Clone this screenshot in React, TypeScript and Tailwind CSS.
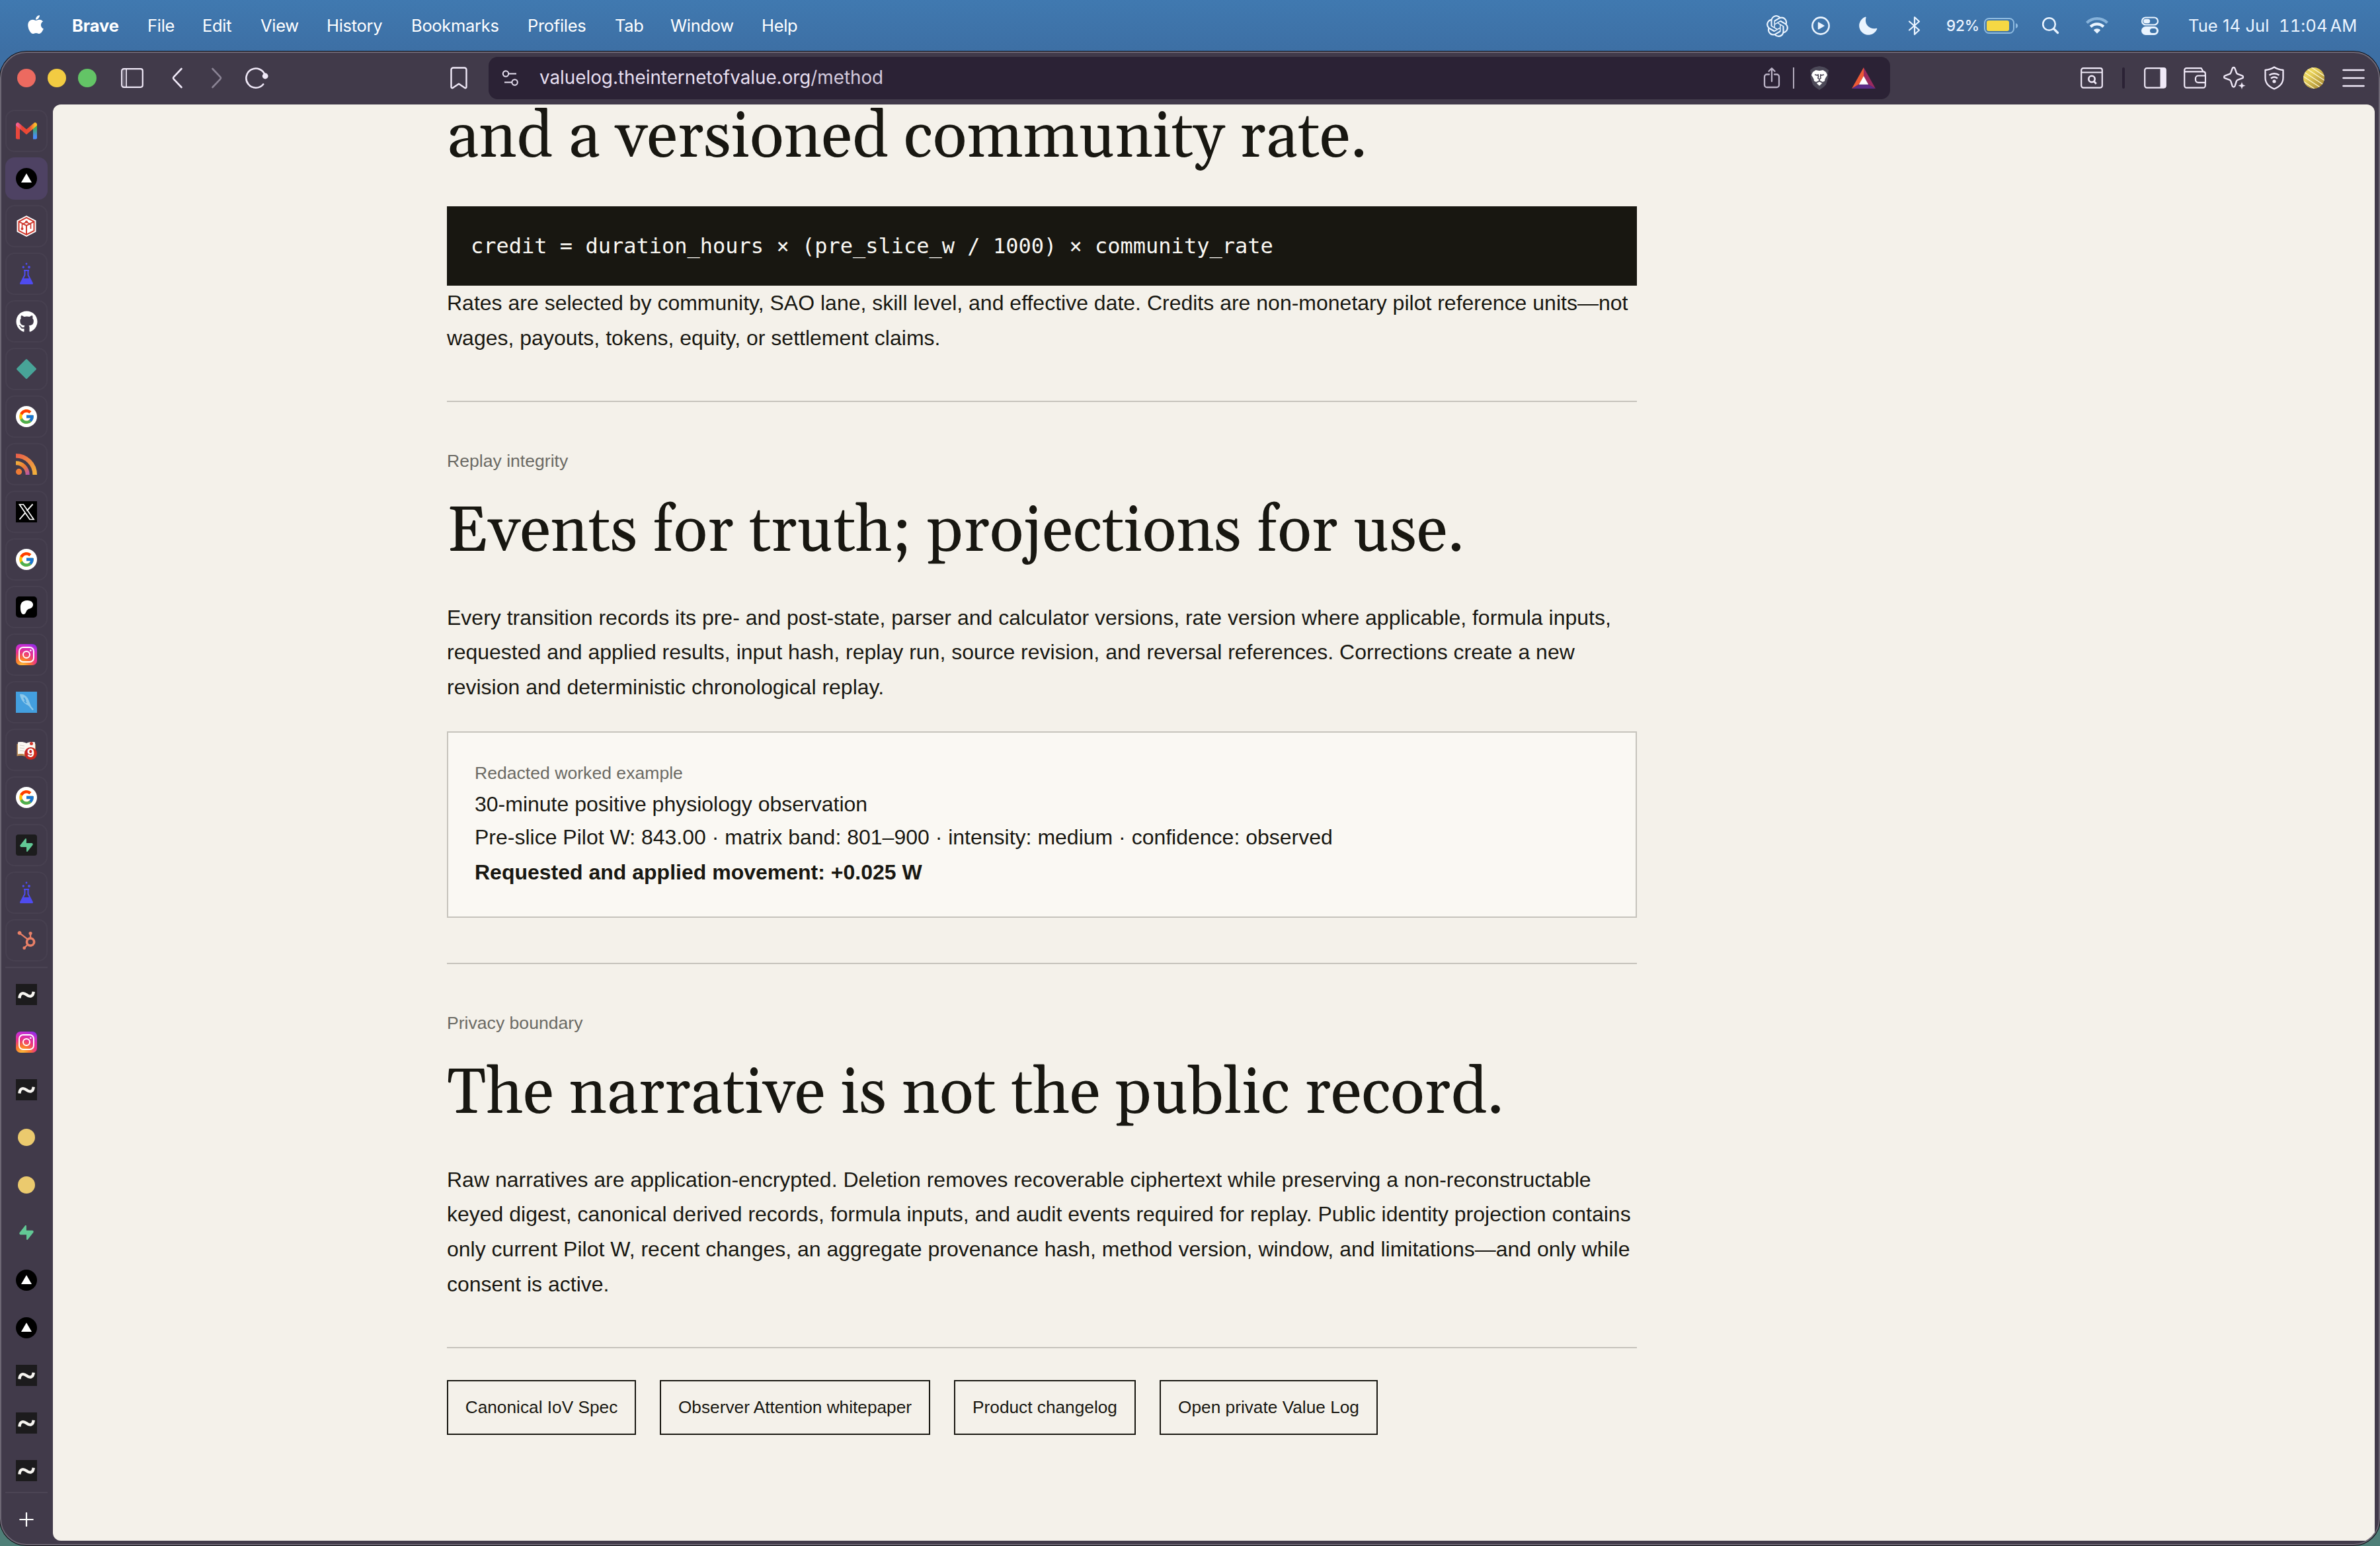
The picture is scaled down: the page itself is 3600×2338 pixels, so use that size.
import React from "react";
import { FaApple, FaGithub } from "react-icons/fa";
import { FcGoogle } from "react-icons/fc";
import { SiHubspot, SiOpenai, SiPatreon, SiSupabase } from "react-icons/si";

/* ---------- menu bar ---------- */

const menuItems = [
  { label: "File", width: "w-[83px]" },
  { label: "Edit", width: "w-[88px]" },
  { label: "View", width: "w-[100px]" },
  { label: "History", width: "w-[128px]" },
  { label: "Bookmarks", width: "w-[176px]" },
  { label: "Profiles", width: "w-[132px]" },
  { label: "Tab", width: "w-[84px]" },
  { label: "Window", width: "w-[138px]" },
  { label: "Help", width: "w-[80px]" },
];

function MenuBar() {
  return (
    <header className="flex h-[78px] w-full items-center font-['Inter',sans-serif] text-[25.5px] tracking-[-0.3px] text-white">
      <FaApple className="ml-[39px] mb-[4px] h-[32px] w-[30px] shrink-0" />
      <span className="ml-[40px] w-[114px] font-bold tracking-[-0.1px]">
        Brave
      </span>
      {menuItems.map((item) => (
        <span key={item.label} className={item.width}>
          {item.label}
        </span>
      ))}

      <div className="ml-auto flex items-center text-[#eaf4ff]">
        <div className="flex w-[66px] justify-center">
          <SiOpenai className="h-[33px] w-[33px]" />
        </div>
        <div className="flex w-[66px] justify-center">
          <svg width="30" height="30" viewBox="0 0 30 30" fill="none">
            <circle cx="15" cy="15" r="12.6" stroke="currentColor" strokeWidth="2.6" />
            <path d="M11.5 10.2v9.6l8.6-4.8z" fill="currentColor" stroke="currentColor" strokeWidth="1.4" strokeLinejoin="round" />
          </svg>
        </div>
        <div className="flex w-[78px] justify-center">
          <svg width="28" height="28" viewBox="0 0 28 28" fill="currentColor">
            <path d="M9.5.6c.7-.3 1.4.3 1.1 1C9.2 6.2 10 11 13.5 14.6c3.4 3.3 8.2 4.4 12.6 3.1.8-.2 1.4.5 1.1 1.2A14 14 0 1 1 9.5.6z" />
          </svg>
        </div>
        <div className="flex w-[62px] justify-center">
          <svg width="20" height="30" viewBox="0 0 20 30" fill="none" stroke="currentColor" strokeWidth="2.2" strokeLinejoin="round" strokeLinecap="round">
            <path d="M2 8.5l15 13L10 28V2l7 6.5-15 13" />
          </svg>
        </div>
        <div className="flex w-[142px] items-center pl-[17px]">
          <span className="w-[57px] text-[22.5px] font-medium tracking-[-0.2px]">92%</span>
          <svg width="52" height="26" viewBox="0 0 52 26" fill="none">
            <rect x="1" y="2" width="44" height="22" rx="6.5" stroke="#8fbbe0" strokeWidth="2" />
            <rect x="4" y="5" width="34" height="16" rx="3" fill="#f6d844" />
            <path d="M48 9c2 .8 3.2 2.2 3.2 4s-1.2 3.2-3.2 4z" fill="#8fbbe0" />
          </svg>
        </div>
        <div className="flex w-[64px] justify-center">
          <svg width="28" height="28" viewBox="0 0 28 28" fill="none" stroke="currentColor" strokeLinecap="round">
            <circle cx="12.5" cy="11.5" r="9.3" strokeWidth="2.6" />
            <path d="M19.5 18.5l6 6" strokeWidth="3.4" />
          </svg>
        </div>
        <div className="flex w-[78px] justify-center">
          <svg width="36" height="28" viewBox="0 0 36 28" fill="none" stroke="currentColor">
            <path d="M2.5 9.5C11 1 25 1 33.5 9.5" stroke="#86b2da" strokeWidth="4.2" />
            <path d="M8.2 15.4c5.5-5.4 14.1-5.4 19.6 0" strokeWidth="4.4" />
            <path d="M12.8 20.4c3-2.8 7.4-2.8 10.4 0L18 25.8z" fill="currentColor" stroke="none" />
          </svg>
        </div>
        <div className="flex w-[81px] justify-center">
          <svg width="28" height="28" viewBox="0 0 28 28" fill="none">
            <rect x="2" y="1.5" width="24" height="11" rx="5.5" stroke="currentColor" strokeWidth="2.2" />
            <rect x="4.2" y="3.8" width="10" height="6.4" rx="3.2" fill="currentColor" />
            <rect x="1" y="15" width="26" height="13" rx="6.5" fill="currentColor" />
            <rect x="14" y="18" width="10" height="7" rx="3.5" fill="#3e73a8" />
          </svg>
        </div>
        <div className="w-[308px] whitespace-pre pl-[18px] tracking-[0.1px]">
          Tue 14 Jul{"  "}<span className="tabular-nums">11:04</span>
          <span className="ml-[4px]">AM</span>
        </div>
      </div>
    </header>
  );
}

/* ---------- toolbar ---------- */

function BraveLion() {
  return (
    <svg width="32" height="36" viewBox="0 0 32 36">
      <path d="M9 1.5 16 0l7 1.5 3 1.5 4 3-1 6 .5 5-3.5 11-4 4-6 4-6-4-4-4L2.5 17 3 12 2 6l4-3z" fill="#4c4958" />
      <path d="M10.5 6 16 7l5.5-1 4.5 3L28 13.500l-3.500 6-.5 3-3 1.500-5-2.500-5 2.500-3-1.500-.5-3-3.500-6L6 9z" fill="#fff" />
      <path d="M16 23.500l4.300 2.200-4.300 4-4.300-4z" fill="#fff" />
      <path d="M9 12.800l4.500 1.200M23 12.800l-4.500 1.200M14 12l.5 4-.7 2.200 2.200 1.500 2.200-1.500-.7-2.200.5-4M16 20v3" fill="none" stroke="#2f2a3b" strokeWidth="1.3" />
    </svg>
  );
}

function ToolbarButton({ children }: { children: React.ReactNode }) {
  return (
    <div className="flex h-[60px] w-[60px] items-center justify-center">
      {children}
    </div>
  );
}

function Toolbar() {
  return (
    <div className="flex h-[78px] items-center pb-[2px] text-[#f0e9f8]">
      <div className="ml-[24px] flex gap-[18px]">
        <i className="h-[28px] w-[28px] rounded-full bg-[#ec6a60]" />
        <i className="h-[28px] w-[28px] rounded-full bg-[#f2cb42]" />
        <i className="h-[28px] w-[28px] rounded-full bg-[#63c466]" />
      </div>
      <svg className="ml-[37px]" width="34" height="30" viewBox="0 0 34 30" fill="none" stroke="currentColor" strokeWidth="2.2">
        <rect x="1.2" y="1.2" width="31.6" height="27.6" rx="3" />
        <path d="M8 1v28" strokeWidth="1.8" />
        <path d="M4.5 1v28" strokeWidth="0.5" />
      </svg>
      <svg className="ml-[43px]" width="16" height="32" viewBox="0 0 16 32" fill="none" stroke="currentColor" strokeWidth="2.6" strokeLinecap="round" strokeLinejoin="round">
        <path d="M14.5 2 3 14.2c-1.2 1.2-1.2 2.4 0 3.6L14.5 30" />
      </svg>
      <svg className="ml-[44px] text-[#8a8394]" width="16" height="32" viewBox="0 0 16 32" fill="none" stroke="currentColor" strokeWidth="2.6" strokeLinecap="round" strokeLinejoin="round">
        <path d="M1.5 2 13 14.2c1.2 1.2 1.2 2.4 0 3.6L1.5 30" />
      </svg>
      <svg className="ml-[35px]" width="36" height="34" viewBox="0 0 36 34" fill="none" stroke="currentColor" strokeWidth="2.6" strokeLinecap="round">
        <path d="M27.2 26.5A14.6 14.6 0 1 1 30 13" />
        <circle cx="30.2" cy="14" r="4.4" fill="currentColor" stroke="none" />
      </svg>
      <svg className="ml-[273px]" width="28" height="34" viewBox="0 0 28 34" fill="none" stroke="currentColor" strokeWidth="2.4" strokeLinejoin="round">
        <path d="M5.5 1.5h17a3 3 0 0 1 3 3v26c0 1.5-1.4 2.2-2.6 1.3L14 25.7l-8.9 6.1c-1.2.9-2.6.2-2.6-1.3v-26a3 3 0 0 1 3-3z" />
      </svg>

      <div className="ml-[31px] flex h-[64px] w-[2120px] items-center rounded-[14px] bg-[#2b2235] pl-[20px] text-[#e6dff0]">
        <svg width="26" height="26" viewBox="0 0 26 26" fill="none" stroke="currentColor" strokeWidth="2">
          <circle cx="6" cy="6.5" r="4.2" />
          <path d="M10.5 6.5H22M4 19.5h11" />
          <circle cx="19.6" cy="19.5" r="4.2" />
        </svg>
        <span className="ml-[31px] font-['Inter',sans-serif] text-[27.8px]">
          valuelog.theinternetofvalue.org<span className="text-[#d3cadd]">/method</span>
        </span>
        <svg className="ml-auto text-[#bbb3c6]" width="26" height="34" viewBox="0 0 26 34" fill="none" stroke="currentColor" strokeWidth="2.3" strokeLinecap="round" strokeLinejoin="round">
          <path d="M9 11.5H5.5A3.5 3.5 0 0 0 2 15v12.5A3.5 3.5 0 0 0 5.5 31h15a3.5 3.5 0 0 0 3.5-3.5V15a3.5 3.5 0 0 0-3.5-3.5H17M13 22V2.5M8.500 6.700 13 2.200l4.500 4.500" />
        </svg>
        <span className="ml-[19px] h-[32px] w-[2px] bg-[#b3abbd]" />
        <span className="ml-[22px]"><BraveLion /></span>
        <svg className="ml-[33px] mr-[22px]" width="36" height="32" viewBox="0 0 36 32">
          <path d="M18 0 0 32l11-6.5 7-12z" fill="#ee5a36" />
          <path d="M18 0l18 32-11-6.5-7-12z" fill="#9b2a5f" />
          <path d="M0 32h36l-11-6.5H11z" fill="#5c2d87" />
          <path d="M18 13l7.2 12.7H10.8z" fill="#fff" />
        </svg>
      </div>

      <div className="ml-auto mr-[8px] flex items-center">
        <ToolbarButton>
          <svg width="34" height="32" viewBox="0 0 34 32" fill="none" stroke="currentColor" strokeWidth="2.2">
            <rect x="1.2" y="1.2" width="31.6" height="29.4" rx="3" />
            <path d="M1 7.5h32" />
            <circle cx="17" cy="17.5" r="4.7" strokeWidth="2.6" />
            <path d="M20.2 21l3.6 3.8" strokeWidth="2.8" />
          </svg>
        </ToolbarButton>
        <span className="mx-[16px] h-[32px] w-[4px] rounded-full bg-[#2b2235]" />
        <ToolbarButton>
          <svg width="34" height="32" viewBox="0 0 34 32" fill="none" stroke="currentColor" strokeWidth="2.2">
            <rect x="1.2" y="1.2" width="31.6" height="29.4" rx="3" />
            <path d="M24.5 1H31a2 2 0 0 1 2 2v26a2 2 0 0 1-2 2h-6.5z" fill="currentColor" stroke="none" />
          </svg>
        </ToolbarButton>
        <ToolbarButton>
          <svg width="34" height="32" viewBox="0 0 34 32" fill="none" stroke="currentColor" strokeWidth="2.2" strokeLinejoin="round">
            <path d="M32.8 12.5V9.3a3 3 0 0 0-3-3H1.2M1.2 6v21.6a3 3 0 0 0 3 3h25.6a3 3 0 0 0 3-3v-4.8M1.2 6V4.2a3 3 0 0 1 3-3h22.5L29.500 6" />
            <path d="M33 12.5H22a4 4 0 0 0-4 4v2.300a4 4 0 0 0 4 4h11z" />
          </svg>
        </ToolbarButton>
        <ToolbarButton>
          <svg width="36" height="36" viewBox="0 0 36 36" fill="none" stroke="currentColor" strokeWidth="2.4" strokeLinejoin="round">
            <path d="M14.6 3.6c.8-2.2 3.2-2.2 4 0l2.2 6.2c.4 1.2 1.2 2 2.4 2.4l6.2 2.2c2.2.8 2.2 3.2 0 4l-6.2 2.2c-1.2.4-2 1.2-2.4 2.4l-2.2 6.8c-.8 2.2-3.2 2.2-4 0l-2.2-6.8c-.4-1.2-1.2-2-2.4-2.4l-6.2-2.2c-2.2-.8-2.2-3.2 0-4l6.2-2.2c1.2-.4 2-1.2 2.4-2.4z" />
            <path d="M29 23.5l1.7 4.3 4.3 1.7-4.3 1.7-1.7 4.3-1.7-4.3-4.3-1.7 4.3-1.7z" fill="currentColor" stroke="#413a4a" strokeWidth="0.6" />
          </svg>
        </ToolbarButton>
        <ToolbarButton>
          <svg width="32" height="36" viewBox="0 0 32 36" fill="none" stroke="currentColor" strokeWidth="2.3" strokeLinejoin="round">
            <path d="M16 1.5c3.5 2.4 7.5 3.8 13.5 4.5v11.5C29.5 26 25 31 16 34.5 7 31 2.5 26 2.5 17.5V6C8.5 5.3 12.5 3.9 16 1.5z" />
            <path d="M8.5 13.8c4.5-3.4 10.5-3.4 15 0M11 18.5c3-2.3 7-2.3 10 0" strokeWidth="2.4" />
            <circle cx="16" cy="23" r="2.6" fill="currentColor" stroke="none" />
          </svg>
        </ToolbarButton>
        <ToolbarButton>
          <svg width="32" height="32" viewBox="0 0 32 32">
            <defs>
              <clipPath id="avatar-clip"><circle cx="16" cy="16" r="16" /></clipPath>
              <linearGradient id="avatar-fill" x1="0" y1="0" x2="1" y2="1">
                <stop offset="0.3" stopColor="#ead45c" />
                <stop offset="1" stopColor="#9c7c2c" />
              </linearGradient>
            </defs>
            <g clipPath="url(#avatar-clip)">
              <rect width="32" height="32" fill="url(#avatar-fill)" />
              <path d="M8-3l30 20M2 0l34 22M-2 5l34 22M-4 11l34 22M-6 17l30 20" stroke="#fff8d2" strokeWidth="1.3" />
            </g>
          </svg>
        </ToolbarButton>
        <ToolbarButton>
          <svg width="34" height="30" viewBox="0 0 34 30" stroke="currentColor" strokeWidth="2.6" strokeLinecap="round">
            <path d="M1.5 3h31M1.5 15h31M1.5 27h31" />
          </svg>
        </ToolbarButton>
      </div>
    </div>
  );
}

/* ---------- sidebar tabs ---------- */

function Gmail() {
  return (
    <svg width="32" height="32" viewBox="0 0 32 32" fill="none">
      <defs>
        <linearGradient id="gm-r" x1="0" y1="0" x2="0" y2="1">
          <stop offset="0.2" stopColor="#3fae5a" />
          <stop offset="0.8" stopColor="#4a8df6" />
        </linearGradient>
        <linearGradient id="gm-m" x1="0" y1="0" x2="1" y2="0">
          <stop offset="0" stopColor="#f45f8e" />
          <stop offset="0.25" stopColor="#e94335" />
          <stop offset="0.7" stopColor="#ee4e35" />
          <stop offset="1" stopColor="#fbbc2c" />
        </linearGradient>
      </defs>
      <path d="M0 7h6v21.5H2a2 2 0 0 1-2-2z" fill="#e8473c" />
      <path d="M26 7h6v19.5a2 2 0 0 1-2 2h-4z" fill="url(#gm-r)" />
      <path d="M3 6.5l13 11 13-11" stroke="url(#gm-m)" strokeWidth="6" strokeLinecap="round" />
    </svg>
  );
}

function Triangle() {
  return (
    <svg width="32" height="32" viewBox="0 0 32 32">
      <circle cx="16" cy="16" r="16" fill="#000" />
      <path d="M16 8.3L24 22H8z" fill="#fff" />
    </svg>
  );
}

function Cube() {
  return (
    <svg width="32" height="32" viewBox="0 0 32 32" fill="none">
      <path d="M16 0l14.5 7.5v17L16 32 1.5 24.5v-17z" fill="#fff" />
      <path d="M16 3.2l11.5 6v13.600L16 28.8 4.5 22.8V9.2zM4.5 9.2l11.5 6 11.5-6M16 15.2v13.600" stroke="#cf3a30" strokeWidth="2" />
      <path d="M9.5 20v-6.5L16 9.700l6.500 3.800V20" stroke="#cf3a30" strokeWidth="1.7" />
      <circle cx="16" cy="9.5" r="2" fill="#cf3a30" />
      <circle cx="9.5" cy="20" r="2" fill="#cf3a30" />
    </svg>
  );
}

function Flask() {
  return (
    <svg width="32" height="34" viewBox="0 0 32 34" fill="#4f4bef">
      <path d="M12 12h8M13.5 12v7L7 31.5h18L18.5 19v-7" fill="none" stroke="#4f4bef" strokeWidth="2" strokeLinejoin="round" />
      <path d="M11 24h10l4.8 9H6.200z" />
      <circle cx="16" cy="2" r="1.4" />
      <circle cx="11.3" cy="7" r="1.7" />
      <circle cx="20" cy="7" r="1.9" />
    </svg>
  );
}

function Diamond() {
  return (
    <svg width="32" height="32" viewBox="0 0 32 32">
      <path d="M16 2.5L29.5 16 16 29.5 2.500 16z" fill="#48a498" stroke="#48a498" strokeWidth="3" strokeLinejoin="round" />
    </svg>
  );
}

function Google() {
  return (
    <span className="flex h-[32px] w-[32px] items-center justify-center rounded-full bg-white">
      <FcGoogle className="h-[26px] w-[26px]" />
    </span>
  );
}

function Feed() {
  return (
    <svg width="32" height="32" viewBox="0 0 32 32" fill="none">
      <defs>
        <linearGradient id="feed-a" x1="0" y1="0" x2="1" y2="1">
          <stop offset="0" stopColor="#e9604a" />
          <stop offset="1" stopColor="#f2b23b" />
        </linearGradient>
        <linearGradient id="feed-b" x1="0" y1="0" x2="1" y2="1">
          <stop offset="0" stopColor="#f0ae3c" />
          <stop offset="0.5" stopColor="#ec7a34" />
          <stop offset="1" stopColor="#b957a8" />
        </linearGradient>
      </defs>
      <path d="M0 3.3c16 0 28.7 12.7 28.7 28.7" stroke="url(#feed-a)" strokeWidth="6.6" />
      <path d="M0 14.3c10 0 17.7 7.7 17.7 17.7" stroke="url(#feed-b)" strokeWidth="6" />
      <circle cx="4.6" cy="27.4" r="4.6" fill="#ee7b35" />
    </svg>
  );
}

function XLogo() {
  return (
    <svg width="32" height="32" viewBox="0 0 32 32" fill="none">
      <rect width="32" height="32" fill="#000" />
      <path d="M5.5 5h6L27 27.5h-6z" stroke="#fff" strokeWidth="1.7" />
      <path d="M25.5 4.5l-9 10.2M14.3 17.3L5.500 27.5" stroke="#fff" strokeWidth="1.9" />
    </svg>
  );
}

function Patreon() {
  return (
    <span className="flex h-[32px] w-[32px] items-center justify-center rounded-[5px] bg-black text-white">
      <SiPatreon className="h-[21px] w-[21px]" />
    </span>
  );
}

function Instagram() {
  return (
    <span className="flex h-[32px] w-[32px] items-center justify-center rounded-[7px] bg-[radial-gradient(circle_at_30%_105%,#fdc73e_0%,#fb7a2c_28%,#e8308c_55%,#c92fd0_78%,#6a2cf0_100%)]">
      <svg width="24" height="24" viewBox="0 0 24 24" fill="none" stroke="#fff" strokeWidth="2">
        <rect x="1" y="1" width="22" height="22" rx="6" />
        <circle cx="12" cy="12" r="5" />
        <circle cx="18.3" cy="5.7" r="1.3" fill="#fff" stroke="none" />
      </svg>
    </span>
  );
}

function Feather() {
  return (
    <svg width="32" height="32" viewBox="0 0 32 32" fill="none">
      <rect width="32" height="32" fill="#439fdf" />
      <path d="M6 4c5-1 10 2 13 8l4 10-4-1C12 18 7 12 6 4z" fill="#8dc8ea" />
      <path d="M12 9l3 5M13 14l3 3" stroke="#439fdf" strokeWidth="2" />
      <path d="M18 18l8 9.5" stroke="#8dc8ea" strokeWidth="2.4" />
    </svg>
  );
}

function Reader() {
  return (
    <div className="relative h-[32px] w-[32px]">
      <svg width="32" height="32" viewBox="0 0 32 32" fill="none">
        <path d="M1.5 7v18.5c5-1 9-1 14 1V8zM30 7v18.5c-5-1-9-1-14 1V8z" fill="#b98a55" />
        <path d="M3 4.5c5-1 9-.5 13 1.5v18c-4-2-8-2.5-13-1.5zM29 4.5c-5-1-9-.5-13 1.5v18c4-2 8-2.5 13-1.5z" fill="#fbf8f2" />
        <path d="M6 9l7 1M6 13l7 1M6 17l7 1" stroke="#d5d1ca" />
        <circle cx="23.5" cy="6.5" r="2.5" fill="#d4382c" />
      </svg>
      <span className="absolute bottom-[1px] right-0 flex h-[19px] w-[19px] items-center justify-center rounded-full bg-[#c9281f] font-['Inter',sans-serif] text-[17px] font-bold leading-none text-white">
        9
      </span>
    </div>
  );
}

function SupabaseDark() {
  return (
    <span className="flex h-[32px] w-[32px] items-center justify-center rounded-[4px] bg-[#1c1c1d] text-[#62c895]">
      <SiSupabase className="h-[20px] w-[20px]" />
    </span>
  );
}

function Supabase() {
  return <SiSupabase className="h-[22px] w-[22px] text-[#62c895]" />;
}

function Hubspot() {
  return <SiHubspot className="h-[28px] w-[28px] text-[#ea8067]" />;
}

function Wave() {
  return (
    <svg width="32" height="32" viewBox="0 0 32 32" fill="none">
      <rect width="32" height="32" fill="#1c1b1d" />
      <path d="M5.4 21.5C6 13.5 11 12.5 16 16.3s10 3.2 10.7-4.5" stroke="#f6f4f0" strokeWidth="4.4" />
    </svg>
  );
}

function Dot() {
  return <span className="h-[26px] w-[26px] rounded-full bg-[#ebca6e]" />;
}

function Github() {
  return <FaGithub className="h-[33px] w-[33px] text-white" />;
}

const pinnedTabs = [
  Gmail, Triangle, Cube, Flask, Github, Diamond, Google, Feed, XLogo,
  Google, Patreon, Instagram, Feather, Reader, Google, SupabaseDark, Flask, Hubspot,
];

const openTabs = [
  Wave, Instagram, Wave, Dot, Dot, Supabase, Triangle, Triangle, Wave, Wave, Wave,
];

function Sidebar() {
  return (
    <aside className="flex w-[78px] shrink-0 flex-col pl-[6px] pt-[8px]">
      <div className="flex flex-col gap-[8px]">
        {pinnedTabs.map((Icon, i) => (
          <div
            key={i}
            className={
              i === 1
                ? "flex h-[64px] w-[64px] items-center justify-center rounded-[14px] bg-[#4e4263]"
                : "flex h-[64px] w-[64px] items-center justify-center rounded-[14px] border-2 border-[#474050]"
            }
          >
            <Icon />
          </div>
        ))}
      </div>
      <div className="my-[8px] h-[2px] w-[64px] bg-[#4b4454]" />
      <div className="flex flex-col gap-[8px]">
        {openTabs.map((Icon, i) => (
          <div key={i} className="flex h-[64px] w-[64px] items-center justify-center">
            <Icon />
          </div>
        ))}
      </div>
      <div className="h-[2px] w-[64px] bg-[#4b4454]" />
      <div className="mt-[29px] flex w-[64px] justify-center">
        <svg width="22" height="22" viewBox="0 0 22 22" stroke="#fff" strokeWidth="2.2" strokeLinecap="round">
          <path d="M11 1.2v19.6M1.2 11h19.6" />
        </svg>
      </div>
    </aside>
  );
}

/* ---------- page ---------- */

function Eyebrow({ children }: { children: React.ReactNode }) {
  return (
    <p className="pb-[2px] text-[26.6px] leading-[42px] text-[#6b6a64]">{children}</p>
  );
}

function Heading({ children }: { children: React.ReactNode }) {
  return (
    <h2 className="whitespace-nowrap font-['Gelasio','Georgia',serif] text-[96px] leading-[96px]">
      {children}
    </h2>
  );
}

const links = [
  { label: "Canonical IoV Spec", width: "w-[286px]" },
  { label: "Observer Attention whitepaper", width: "w-[409px]" },
  { label: "Product changelog", width: "w-[275px]" },
  { label: "Open private Value Log", width: "w-[330px]" },
];

function MethodPage() {
  return (
    <main className="mb-[5px] mr-[6px] flex-1 rounded-[12px] bg-[#f4f1ea] pl-[596px] font-['Liberation_Sans',Arial,sans-serif] text-[32px] leading-[52.8px] text-[#181711]">
      <div className="w-[1800px]">
        <section className="pb-[68px] pt-[3px]">
          <Heading>and a versioned community rate.</Heading>
          <pre className="mt-[55px] h-[120px] bg-[#181711] p-[36px] font-['DejaVu_Sans_Mono',monospace] text-[32px] leading-[48px] text-[#faf8f3]">
            credit = duration_hours × (pre_slice_w / 1000) × community_rate
          </pre>
          <p>
            Rates are selected by community, SAO lane, skill level, and effective date. Credits are non-monetary pilot reference units—not
            <br />
            wages, payouts, tokens, equity, or settlement claims.
          </p>
        </section>

        <section className="border-t-2 border-[#c6c3bc] py-[68px]">
          <Eyebrow>Replay integrity</Eyebrow>
          <div className="mt-[37px]">
            <Heading>Events for truth; projections for use.</Heading>
          </div>
          <p className="mt-[55px]">
            Every transition records its pre- and post-state, parser and calculator versions, rate version where applicable, formula inputs,
            <br />
            requested and applied results, input hash, replay run, source revision, and reversal references. Corrections create a new
            <br />
            revision and deterministic chronological replay.
          </p>
          <div className="mt-[40px] border-2 border-[#c6c3bc] bg-[#faf8f3] p-[40px]">
            <Eyebrow>Redacted worked example</Eyebrow>
            <h3 className="leading-[48px]">30-minute positive physiology observation</h3>
            <p>Pre-slice Pilot W: 843.00 · matrix band: 801–900 · intensity: medium · confidence: observed</p>
            <p className="font-bold">Requested and applied movement: +0.025 W</p>
          </div>
        </section>

        <section className="border-t-2 border-[#c6c3bc] py-[68px]">
          <Eyebrow>Privacy boundary</Eyebrow>
          <div className="mt-[37px]">
            <Heading>The narrative is not the public record.</Heading>
          </div>
          <p className="mt-[55px]">
            Raw narratives are application-encrypted. Deletion removes recoverable ciphertext while preserving a non-reconstructable
            <br />
            keyed digest, canonical derived records, formula inputs, and audit events required for replay. Public identity projection contains
            <br />
            only current Pilot W, recent changes, an aggregate provenance hash, method version, window, and limitations—and only while
            <br />
            consent is active.
          </p>
        </section>

        <nav className="flex gap-[36px] border-t-2 border-[#c6c3bc] pt-[48px] text-[26.25px]">
          {links.map((link) => (
            <a key={link.label} className={`${link.width} flex h-[83px] shrink-0 items-center justify-center whitespace-nowrap border-2 border-[#181711]`}>
              {link.label}
            </a>
          ))}
        </nav>
      </div>
    </main>
  );
}

export default function App() {
  return (
    <div className="h-[2338px] w-[3600px] overflow-hidden bg-[linear-gradient(180deg,#4079b0_0px,#3d6fa4_78px,#3d6fa4_300px,#4f7f78_2300px)]">
      <MenuBar />
      <div className="flex h-[2259px] w-full flex-col overflow-hidden rounded-[40px] border-2 border-[#6d6774] bg-[#413a4a] shadow-[0_0_0_1px_#0b0b12]">
        <Toolbar />
        <div className="flex min-h-0 flex-1">
          <Sidebar />
          <MethodPage />
        </div>
      </div>
    </div>
  );
}
